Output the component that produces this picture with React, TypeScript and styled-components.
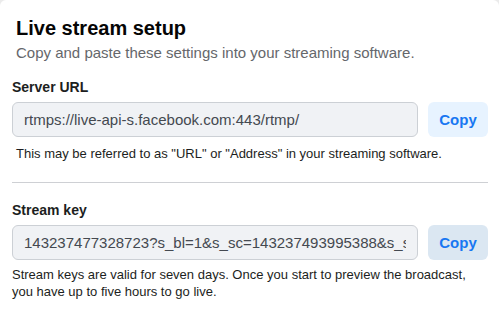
import React from "react";
import styled, { createGlobalStyle } from "styled-components";

const GlobalStyle = createGlobalStyle`
  html, body {
    margin: 0;
    padding: 0;
    background: #ebebeb;
  }
  * {
    box-sizing: border-box;
  }
`;

const Card = styled.div`
  min-height: 100vh;
  background: #ffffff;
  border-radius: 6px 6px 0 0;
  padding: 16px 11px 0 12px;
  font-family: "Liberation Sans", Arial, sans-serif;
  color: #1c1e21;
`;

const Header = styled.div`
  padding-left: 4px;
  margin-bottom: 15px;

  & .heading {
    margin: 0;
    font-size: 20px;
    line-height: 24px;
    font-weight: 700;
    color: #050505;
  }

  & .subheading {
    margin-top: 3px;
    font-size: 15px;
    line-height: 20px;
    color: #65676b;
  }
`;

const Label = styled.div`
  font-size: 14px;
  line-height: 18px;
  font-weight: 700;
  color: #1c1e21;
  margin-bottom: 6px;
`;

const FieldRow = styled.div`
  display: flex;
  align-items: stretch;
  column-gap: 10px;
`;

const Field = styled.input`
  flex: 1;
  min-width: 0;
  height: 35px;
  padding: 0 11px;
  border: 1px solid #ccd0d5;
  border-radius: 6px;
  background: #f0f2f5;
  font-family: "Liberation Sans", Arial, sans-serif;
  font-size: 15px;
  color: #444950;
  outline: none;
`;

const CopyButton = styled.button<{ $active?: boolean }>`
  width: 60px;
  height: 35px;
  padding: 0;
  border: none;
  border-radius: 6px;
  background: ${(p) => (p.$active ? "#dbe7f2" : "#e7f3ff")};
  color: #1877f2;
  font-family: "Liberation Sans", Arial, sans-serif;
  font-size: 15px;
  font-weight: 700;
  cursor: pointer;
`;

const Hint = styled.div<{ $top: number; $indent?: number }>`
  margin-top: ${(p) => p.$top}px;
  padding-left: ${(p) => p.$indent || 0}px;
  font-size: 13px;
  line-height: 17px;
  color: #1c1e21;
`;

const Divider = styled.hr`
  margin: 20px 0 18px;
  border: none;
  border-top: 1px solid #ced0d4;
`;

const STREAM_KEY =
  "143237477328723?s_bl=1&s_sc=143237493995388&s_sw=0&s_vt=api-s&a=AbzVJ0Ht1q8hWx3K";

const App = () => {
  return (
    <>
      <GlobalStyle />
      <Card>
        <Header>
          <h2 className="heading">Live stream setup</h2>
          <div className="subheading">
            Copy and paste these settings into your streaming software.
          </div>
        </Header>

        <Label>Server URL</Label>
        <FieldRow>
          <Field readOnly value="rtmps://live-api-s.facebook.com:443/rtmp/" />
          <CopyButton>Copy</CopyButton>
        </FieldRow>
        <Hint $top={8} $indent={4}>
          This may be referred to as "URL" or "Address" in your streaming
          software.
        </Hint>

        <Divider />

        <Label>Stream key</Label>
        <FieldRow>
          <Field readOnly value={STREAM_KEY} />
          <CopyButton $active>Copy</CopyButton>
        </FieldRow>
        <Hint $top={6}>
          Stream keys are valid for seven days. Once you start to preview the
          broadcast, you have up to five hours to go live.
        </Hint>
      </Card>
    </>
  );
};

export default App;
